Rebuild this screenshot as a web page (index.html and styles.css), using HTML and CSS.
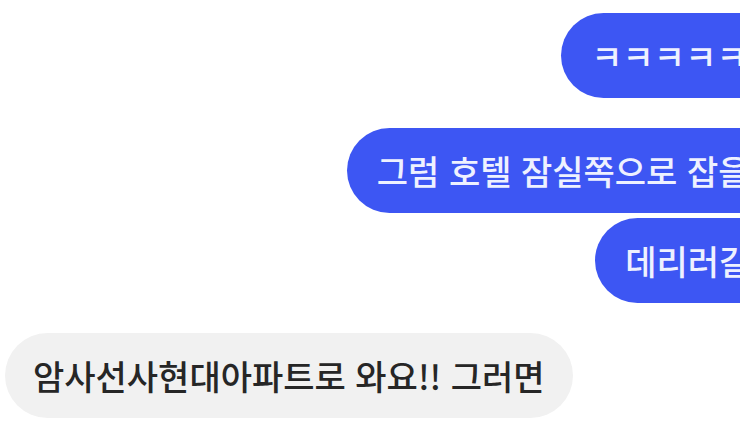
FILE: index.html
```html
<!DOCTYPE html>
<html lang="ko">
<head>
    <meta charset="UTF-8">
    <meta name="viewport" content="width=device-width, initial-scale=1">
    <title>채팅</title>
    <link rel="stylesheet" href="styles.css">
</head>
<body>

<div class="thread">
    <div class="bubble out first">ㅋㅋㅋㅋㅋㅋ</div>
    <div class="bubble out">그럼 호텔 잠실쪽으로 잡을게요</div>
    <div class="bubble out tail">데리러갈게요</div>
    <div class="bubble in">암사선사현대아파트로 와요!! 그러면</div>
</div>

</body>
</html>
```

FILE: styles.css
```css
* {
    margin: 0;
    padding: 0;
    box-sizing: border-box;
}
body {
    background: #fff;
    font-family: "Noto Sans CJK KR", "Noto Sans", sans-serif;
}
/* 화면 오른쪽이 잘린 대화창 */
.thread {
    width: 740px;
    height: 432px;
    overflow: hidden;
    display: flex;
    flex-direction: column;
    padding-top: 13px;
}
.bubble {
    height: 85px;
    line-height: 85px;
    border-radius: 43px;
    font-size: 34px;
    font-weight: 500;
    white-space: nowrap;
    padding: 0 30px;
    flex-shrink: 0;
}
.out {
    align-self: flex-end;
    background: #3d56f3;
    color: #eef1ff;
    margin-top: 30px;
    margin-right: -102px;
}
.out.first {
    margin-top: 0;
    margin-right: -69px;
}
.out.tail {
    margin-top: 5px;
    margin-right: -103px;
}
.in {
    align-self: flex-start;
    background: #f1f1f1;
    color: #262626;
    margin: 30px 0 0 5px;
    padding: 0 28px;
}
```
